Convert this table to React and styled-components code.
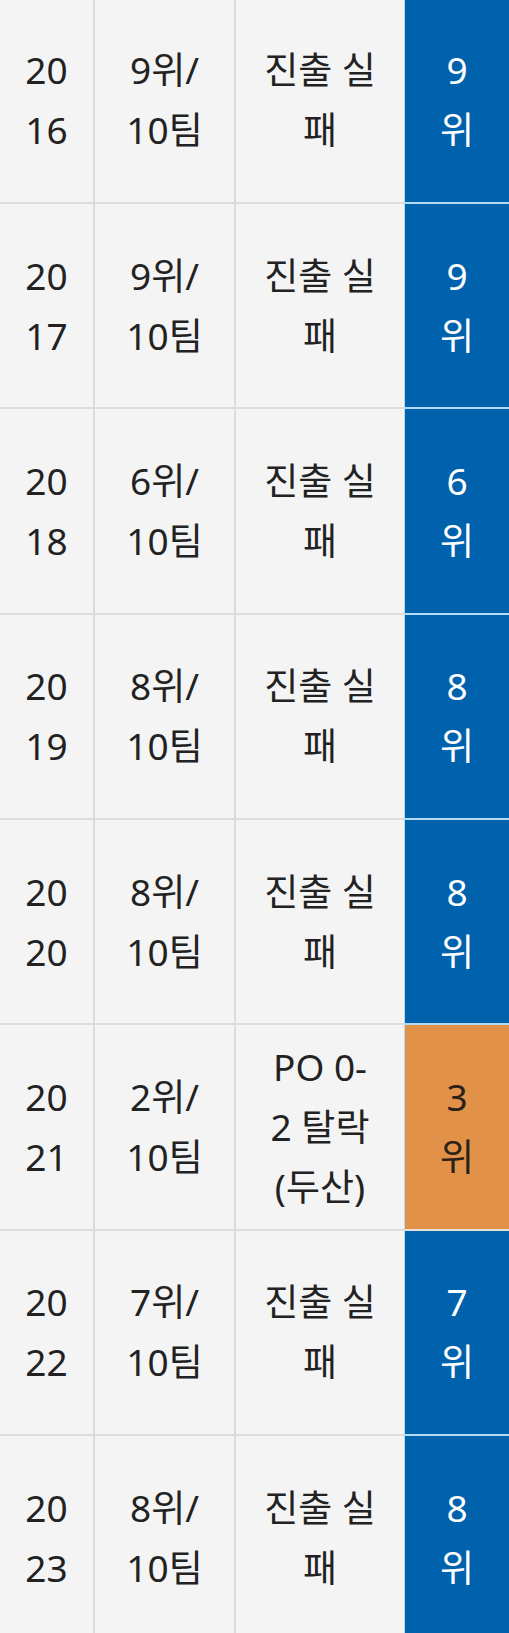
import React from 'react'
import styled, { createGlobalStyle } from 'styled-components'

const GlobalStyle = createGlobalStyle`
  html, body {
    margin: 0;
    padding: 0;
    background: #f4f4f4;
  }
  body {
    font-family: 'Noto Sans', 'Noto Sans CJK KR', sans-serif;
    overflow: hidden;
  }
`

const Table = styled.div`
  width: 509px;
  margin-top: -1.33px;
  display: flex;
  flex-direction: column;
`

const Row = styled.div`
  display: grid;
  grid-template-columns: 95px 141px 168px 1fr;
  height: 205.33px;
`

const Cell = styled.div`
  display: flex;
  align-items: center;
  justify-content: center;
  text-align: center;
  box-sizing: border-box;
  font-size: 37px;
  line-height: 60px;
  color: #222;
  background: #f4f4f4;
  border-bottom: 2px solid #dcdcdc;
  border-right: ${(p) => (p.$last ? 'none' : '2px solid #dcdcdc')};
`

const RankCell = styled(Cell)`
  background: ${(p) => (p.$playoff ? '#e29149' : '#0062ad')};
  color: ${(p) => (p.$playoff ? '#2a2118' : '#ffffff')};
  border-left: 1px solid #b3dbf3;
  border-bottom: 2px solid ${(p) => (p.$playoff ? '#e6dfd6' : '#b3dbf3')};
`

const Lines = ({ lines }) => (
  <span>
    {lines.map((l, i) => (
      <React.Fragment key={i}>
        {i > 0 && <br />}
        {l}
      </React.Fragment>
    ))}
  </span>
)

const seasons = [
  { year: '2016', place: '9', result: null, final: '9' },
  { year: '2017', place: '9', result: null, final: '9' },
  { year: '2018', place: '6', result: null, final: '6' },
  { year: '2019', place: '8', result: null, final: '8' },
  { year: '2020', place: '8', result: null, final: '8' },
  { year: '2021', place: '2', result: ['PO 0-', '2 탈락', '(두산)'], final: '3', playoff: true },
  { year: '2022', place: '7', result: null, final: '7' },
  { year: '2023', place: '8', result: null, final: '8' },
]

export default function App() {
  return (
    <>
      <GlobalStyle />
      <Table>
        {seasons.map((s) => (
          <Row key={s.year}>
            <Cell>
              <Lines lines={[s.year.slice(0, 2), s.year.slice(2)]} />
            </Cell>
            <Cell>
              <Lines lines={[`${s.place}위/`, '10팀']} />
            </Cell>
            <Cell $last>
              <Lines lines={s.result || ['진출 실', '패']} />
            </Cell>
            <RankCell $playoff={s.playoff} $last>
              <Lines lines={[s.final, '위']} />
            </RankCell>
          </Row>
        ))}
      </Table>
    </>
  )
}
